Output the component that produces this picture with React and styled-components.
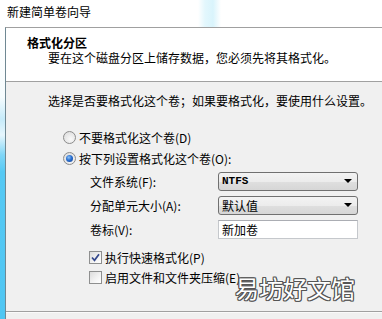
import React from 'react';
import styled, { createGlobalStyle } from 'styled-components';

const GlobalStyle = createGlobalStyle`
  html, body {
    margin: 0;
    padding: 0;
    background: #f0f0f0;
  }
  body {
    font-family: "Noto Sans CJK SC", "Noto Sans", sans-serif;
    font-size: 12px;
    color: #000;
  }
`;

export default function App() {
  return (
    <Window>
      <GlobalStyle />
      <TitleBar>新建简单卷向导</TitleBar>
      <Frame>
        <FrameEdge />
        <Content>
          <Header>
            <HeaderTitle>格式化分区</HeaderTitle>
            <HeaderSub>要在这个磁盘分区上储存数据，您必须先将其格式化。</HeaderSub>
          </Header>
          <Panel>
            <Intro>选择是否要格式化这个卷；如果要格式化，要使用什么设置。</Intro>
            <Options>
              <OptionRow>
                <Radio />
                <span>不要格式化这个卷(D)</span>
              </OptionRow>
              <OptionRow>
                <Radio checked />
                <span>按下列设置格式化这个卷(O):</span>
              </OptionRow>
            </Options>
            <Form>
              <Label>文件系统(F):</Label>
              <Select>
                <SelectMono>NTFS</SelectMono>
                <Arrow />
              </Select>
              <Label>分配单元大小(A):</Label>
              <Select>
                <span>默认值</span>
                <Arrow />
              </Select>
              <Label>卷标(V):</Label>
              <TextBox>新加卷</TextBox>
            </Form>
            <Checks>
              <CheckRow>
                <CheckBox>
                  <svg width="11" height="11" viewBox="0 0 11 11">
                    <path d="M2 5.5 L4.5 8.3 L9 2.2" fill="none" stroke="#34488c" strokeWidth="1.7" />
                  </svg>
                </CheckBox>
                <span>执行快速格式化(P)</span>
              </CheckRow>
              <CheckRow>
                <CheckBox />
                <span>启用文件和文件夹压缩(E)</span>
              </CheckRow>
            </Checks>
          </Panel>
          <Footer />
        </Content>
      </Frame>
      <Watermark>易坊好文馆</Watermark>
    </Window>
  );
}

const Window = styled.div`
  position: relative;
  width: 382px;
  height: 319px;
  overflow: hidden;
  display: flex;
  flex-direction: column;
`;

const TitleBar = styled.div`
  height: 27px;
  box-sizing: border-box;
  padding: 3px 0 0 7px;
  line-height: 17px;
  background: linear-gradient(
    90deg,
    #fff 198px,
    #e3f7fd 205px,
    #d9f4fc 213px,
    #fff 221px
  );
`;

const Frame = styled.div`
  flex: 1;
  display: flex;
`;

const FrameEdge = styled.div`
  width: 5px;
  background: linear-gradient(
    180deg,
    #ffffff 0px,
    #f6fcfe 70px,
    #c6ebfa 92px,
    #e6f6fd 108px,
    #7fd6f7 128px,
    #55c9f4 145px,
    #4fc6f3 100%
  );
`;

const Content = styled.div`
  flex: 1;
  display: flex;
  flex-direction: column;
  border-left: 1px solid #6f8893;
  border-top: 1px solid #a0a0a0;
  background: #f0f0f0;
`;

const Header = styled.div`
  height: 54px;
  box-sizing: border-box;
  padding-top: 7px;
  background: #fff;
  border-bottom: 1px solid #a0a0a0;
`;

const HeaderTitle = styled.div`
  padding-left: 21px;
  line-height: 15px;
  font-weight: bold;
`;

const HeaderSub = styled.div`
  padding-left: 42px;
  line-height: 15px;
`;

const Panel = styled.div`
  height: 229px;
  box-sizing: border-box;
  padding: 11px 0 0 42px;
`;

const Intro = styled.div`
  line-height: 15px;
`;

const Options = styled.div`
  margin-top: 19px;
  padding-left: 15px;
`;

const OptionRow = styled.div`
  height: 21px;
  display: flex;
  align-items: center;
  gap: 3px;
`;

const Radio = styled.span`
  position: relative;
  width: 13px;
  height: 13px;
  box-sizing: border-box;
  border-radius: 50%;
  border: 1px solid #8c8c8c;
  background: radial-gradient(circle at 60% 65%, #f9f9f9 0%, #e2e2e2 70%, #d6d6d6 100%);

  &::after {
    content: '';
    display: ${p => (p.checked ? 'block' : 'none')};
    position: absolute;
    left: 2px;
    top: 2px;
    width: 7px;
    height: 7px;
    border-radius: 50%;
    background: radial-gradient(circle at 40% 35%, #8fc3f5 0%, #2a6fd0 45%, #133f8f 100%);
  }
`;

const Form = styled.div`
  margin-left: 42px;
  display: grid;
  grid-template-columns: 128px 140px;
  grid-auto-rows: 24px;
  align-items: center;
`;

const Label = styled.span`
  line-height: 15px;
`;

const Select = styled.div`
  height: 19px;
  box-sizing: border-box;
  display: flex;
  align-items: center;
  justify-content: space-between;
  padding: 0 5px 0 3px;
  border: 1px solid #707070;
  border-radius: 3px;
  background: linear-gradient(180deg, #f3f3f3 0%, #ececec 50%, #dfdfdf 51%, #d6d6d6 100%);
  line-height: 15px;
`;

const SelectMono = styled.span`
  font-family: "Liberation Mono", "DejaVu Sans Mono", monospace;
  font-size: 11px;
  font-weight: bold;
`;

const Arrow = styled.span`
  width: 0;
  height: 0;
  border-left: 4px solid transparent;
  border-right: 4px solid transparent;
  border-top: 4px solid #000;
`;

const TextBox = styled.div`
  height: 19px;
  box-sizing: border-box;
  display: flex;
  align-items: center;
  padding-left: 3px;
  background: #fff;
  border: 1px solid #c5c8cc;
  border-top-color: #abadb3;
  line-height: 15px;
`;

const Checks = styled.div`
  margin-top: 6px;
  margin-left: 41px;
`;

const CheckRow = styled.div`
  height: 20px;
  display: flex;
  align-items: center;
  gap: 3px;
`;

const CheckBox = styled.span`
  width: 13px;
  height: 13px;
  box-sizing: border-box;
  display: flex;
  align-items: center;
  justify-content: center;
  border: 1px solid #8e8f8f;
  background: linear-gradient(135deg, #dcdcdc 0%, #f4f4f4 60%, #fff 100%);
`;

const Footer = styled.div`
  flex: 1;
  border-top: 1px solid #a0a0a0;
  box-shadow: inset 0 1px 0 #fafafa;
`;

const Watermark = styled.div`
  position: absolute;
  left: 235px;
  top: 276px;
  font-size: 24px;
  line-height: 24px;
  color: #fff;
  text-shadow:
    1px 0 0 #555,
    -1px 0 0 #555,
    0 1px 0 #555,
    0 -1px 0 #555,
    1px 1px 0 #555,
    -1px -1px 0 #555,
    1px -1px 0 #555,
    -1px 1px 0 #555;
`;
